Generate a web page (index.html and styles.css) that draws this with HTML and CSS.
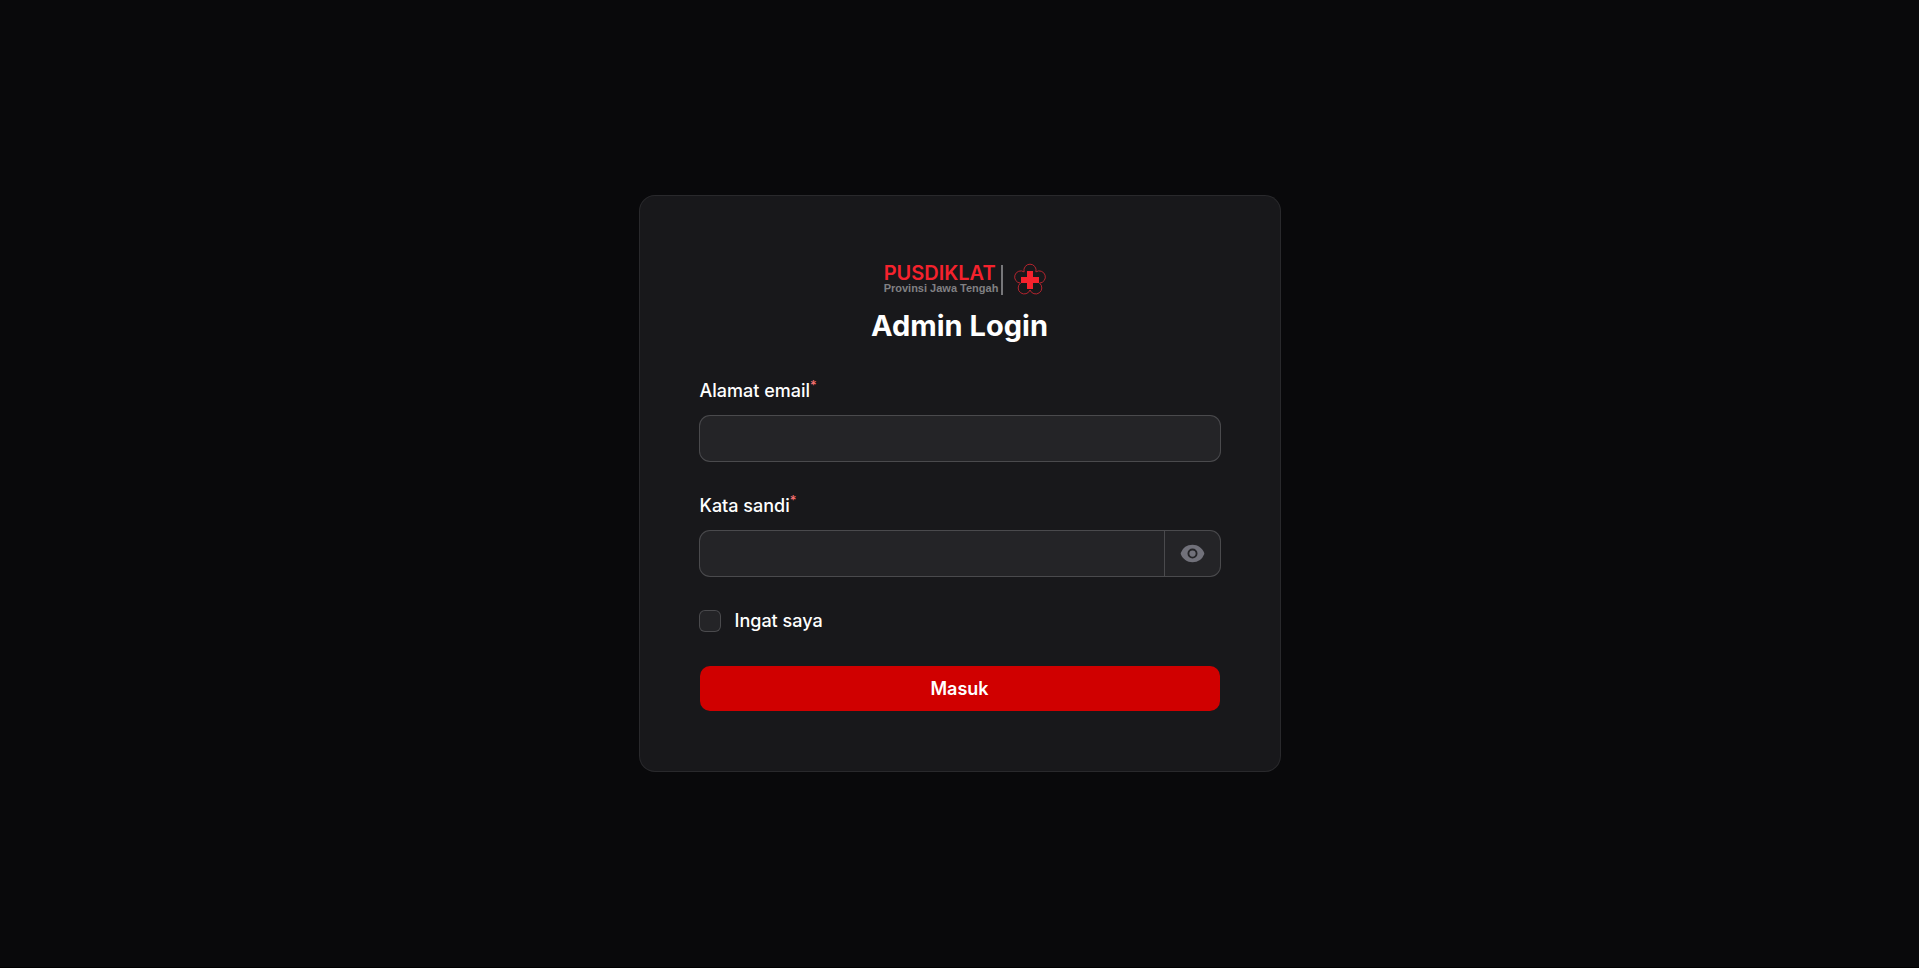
FILE: index.html
```html
<!DOCTYPE html>
<html lang="id">
<head>
<meta charset="utf-8">
<title>Admin Login</title>
<link rel="stylesheet" href="styles.css">
</head>
<body>
<main class="page">
  <section class="card">
    <header class="card-header">
      <div class="brand">
        <div class="brand-text">
          <span class="brand-name">PUSDIKLAT</span>
          <span class="brand-region">Provinsi Jawa Tengah</span>
        </div>
        <svg class="brand-mark" viewBox="0 0 34 34" width="34" height="34" aria-hidden="true">
          <path d="M11.120 8.910A6.100 6.100 0 1 1 22.880 8.910A6.100 6.100 0 1 1 26.510 20.090A6.100 6.100 0 1 1 17 27A6.100 6.100 0 1 1 7.490 20.090A6.100 6.100 0 1 1 11.120 8.910Z" fill="none" stroke="#b3242e" stroke-width="1"/>
          <path d="M14 8h6v6h6v6h-6v6h-6v-6H8v-6h6z" fill="#f5222d"/>
        </svg>
      </div>
      <h1 class="title">Admin Login</h1>
    </header>
    <form class="form">
      <div class="field">
        <label class="label" for="email">Alamat email<sup class="required">*</sup></label>
        <div class="control"><input class="input" id="email" type="email" required></div>
      </div>
      <div class="field">
        <label class="label" for="password">Kata sandi<sup class="required">*</sup></label>
        <div class="control">
          <input class="input" id="password" type="password" required>
          <button class="reveal" type="button" aria-label="Tampilkan kata sandi">
            <svg viewBox="0 0 20 20" width="25" height="25" fill="currentColor" aria-hidden="true">
              <path d="M10 12.500a2.500 2.500 0 1 0 0-5 2.500 2.500 0 0 0 0 5Z"/>
              <path fill-rule="evenodd" clip-rule="evenodd" d="M.664 10.590a1.651 1.651 0 0 1 0-1.186A10.004 10.004 0 0 1 10 3c4.257 0 7.893 2.660 9.336 6.410.147.381.146.804 0 1.186A10.004 10.004 0 0 1 10 17c-4.257 0-7.893-2.660-9.336-6.410ZM14 10a4 4 0 1 1-8 0 4 4 0 0 1 8 0Z"/>
            </svg>
          </button>
        </div>
      </div>
      <label class="remember"><input class="checkbox" type="checkbox">Ingat saya</label>
      <button class="submit" type="submit">Masuk</button>
    </form>
  </section>
</main>
</body>
</html>
```
FILE: styles.css
```css
*, *::before, *::after { box-sizing: border-box; }

body {
  margin: 0;
  background: #09090b;
  color: #fff;
  font-family: Inter, "Liberation Sans", sans-serif;
  font-size: 18px;
  line-height: 30px;
}

.page {
  min-height: 100vh;
  display: flex;
  align-items: center;
  justify-content: center;
  border-bottom: 1px solid #000;
}

.card {
  width: 100%;
  max-width: 640px;
  padding: 60px;
  border-radius: 15px;
  background: #18181b;
  box-shadow: 0 0 0 1px #29292c;
}

.card-header {
  display: flex;
  flex-direction: column;
  align-items: center;
  margin-bottom: 30px;
}

.brand {
  height: 50px;
  padding: 0 0 2px 12px;
  display: flex;
  align-items: center;
}

.brand-text {
  display: flex;
  flex-direction: column;
  padding-right: 3px;
  border-right: 2px solid #77777a;
}

.brand-name {
  color: #f5222d;
  font-size: 20px;
  font-weight: 600;
  line-height: 17px;
}

.brand-region {
  color: #808083;
  font-family: "Liberation Sans", sans-serif;
  font-size: 11px;
  font-weight: 700;
  line-height: 13px;
}

.brand-mark { margin-left: 10px; }

.title {
  margin: 0;
  font-size: 29px;
  font-weight: 700;
  line-height: 40px;
}

.form { display: grid; gap: 30px; }

.field { display: grid; gap: 10px; }

.label, .remember { font-weight: 500; }

.label { justify-self: start; }

.required {
  color: #f87171;
  font-size: 13px;
  line-height: 0;
}

.control {
  display: flex;
  height: 45px;
  border-radius: 10px;
  background: #242427;
  box-shadow: 0 0 0 1px #4a4a4d;
}

.input {
  flex: 1;
  min-width: 0;
  padding: 0 15px;
  border: 0;
  border-radius: 10px;
  outline: 0;
  background: transparent;
  color: #fff;
  font: inherit;
}

.reveal {
  display: flex;
  align-items: center;
  padding: 0 15px;
  border: 0;
  border-left: 1px solid #4a4a4d;
  background: transparent;
  color: #71717a;
}

.remember {
  display: flex;
  align-items: center;
  gap: 15px;
}

.checkbox {
  appearance: none;
  width: 20px;
  height: 20px;
  margin: 0;
  border-radius: 5px;
  background: #242427;
  box-shadow: 0 0 0 1px #4a4a4d;
}

.checkbox:checked { background: #d00000; }

.submit {
  height: 45px;
  border: 0;
  border-radius: 10px;
  background: #d00000;
  color: #fff;
  font: inherit;
  font-weight: 600;
}
```
